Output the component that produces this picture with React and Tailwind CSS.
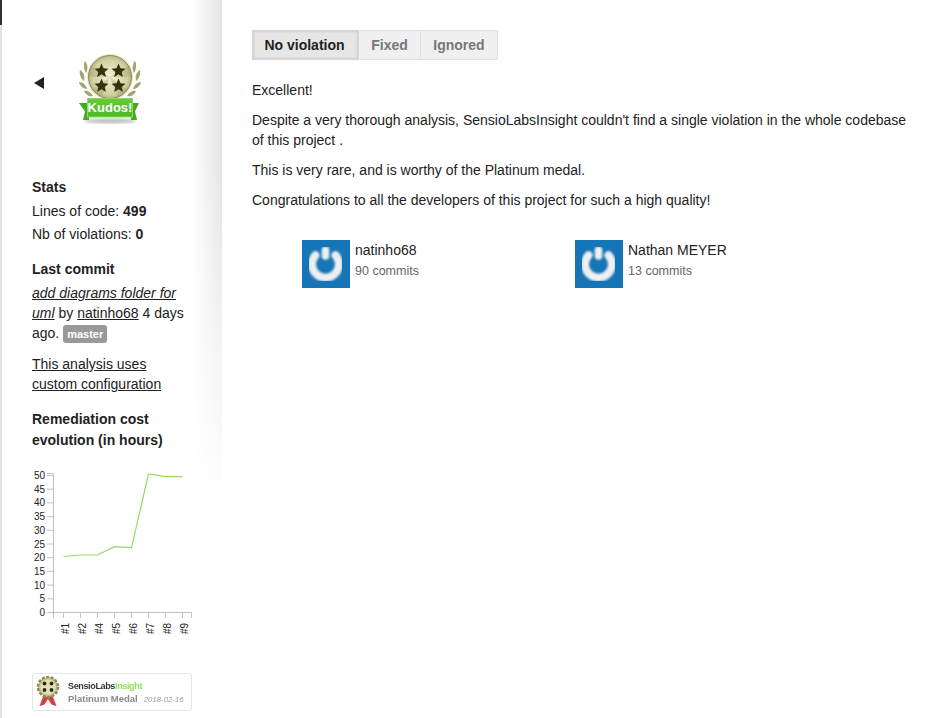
function Star({ x, y }) {
  return <path transform={`translate(${x} ${y}) scale(0.78)`} d="M0-9.5l2.6 6 6.4.6-4.9 4.2 1.5 6.3L0 4.3l-5.6 3.3 1.5-6.3-4.9-4.2 6.4-.6z" />
}

function Medal() {
  return (
    <div className="relative w-[64px] h-[72px]">
      <svg width="64" height="72" viewBox="0 0 64 72">
        <defs>
          <radialGradient id="coin" cx="0.5" cy="0.5" r="0.55">
            <stop offset="0" stopColor="#f4f2da" />
            <stop offset="0.75" stopColor="#d2cfa2" />
            <stop offset="1" stopColor="#aaa672" />
          </radialGradient>
          <linearGradient id="ribbon" x1="0" y1="0" x2="0" y2="1">
            <stop offset="0" stopColor="#64cc36" />
            <stop offset="1" stopColor="#50b828" />
          </linearGradient>
          <filter id="medalblur"><feGaussianBlur stdDeviation="0.35" /></filter>
          <filter id="shadowblur"><feGaussianBlur stdDeviation="1.5" /></filter>
        </defs>
        <ellipse cx="31" cy="67" rx="26" ry="2.5" fill="#000" opacity="0.25" filter="url(#shadowblur)" />
        <g filter="url(#medalblur)">
          {/* laurel */}
          <g fill="#a6a272">
            <path d="M6 7c3 3 3 9 1 12-2-3-3-9-1-12z" />
            <path d="M1 16c4 2 5 7 4 11-3-2-5-7-4-11z" />
            <path d="M0 28c4 0 7 3 8 7-4 0-7-3-8-7z" />
            <path d="M5 37c3-1 7 1 9 5-4 1-7-1-9-5z" />
            <path d="M56 7c-3 3-3 9-1 12 2-3 3-9 1-12z" />
            <path d="M61 16c-4 2-5 7-4 11 3-2 5-7 4-11z" />
            <path d="M62 28c-4 0-7 3-8 7 4 0 7-3 8-7z" />
            <path d="M57 37c-3-1-7 1-9 5 4 1 7-1 9-5z" />
          </g>
          <circle cx="31" cy="23" r="23" fill="#e8e6cc" />
          <circle cx="31" cy="23" r="21.5" fill="url(#coin)" stroke="#8d8a58" strokeWidth="1" />
          {/* darker sunburst wedges */}
          <g fill="#8d8950" opacity="0.25">
            <path d="M31 23L11 11 10 23z" />
            <path d="M31 23L51 11 52 23z" />
            <path d="M31 23L13 36 23 43z" />
            <path d="M31 23L49 36 39 43z" />
          </g>
          <g fill="#33330b">
            <Star x={22.5} y={17} />
            <Star x={39.5} y={17} />
            <Star x={22.5} y={32} />
            <Star x={39.5} y={32} />
          </g>
          {/* ribbon */}
          <path d="M0 49h10v17H4l2-8.5z" fill="#46aa22" />
          <path d="M60 49H52v17h6l-2-8.5z" fill="#46aa22" />
          <rect x="8.5" y="44.5" width="45" height="18.5" fill="url(#ribbon)" stroke="#86dc62" strokeWidth="1" />
        </g>
      </svg>
      <span className="absolute left-[8px] top-[44px] w-[46px] h-[19px] flex items-center justify-center text-white font-bold text-[13px] leading-none">Kudos!</span>
    </div>
  )
}

function Chart() {
  const ticks = [50, 45, 40, 35, 30, 25, 20, 15, 10, 5, 0]
  const xs = [41.5, 58.5, 75.5, 92.5, 109.5, 126.5, 143.5, 160.5]
  const labels = ['#1', '#2', '#4', '#5', '#6', '#7', '#8', '#9']
  return (
    <svg width="172" height="180" viewBox="0 0 172 180" className="block">
      <g stroke="#b9c6cf" fill="none" strokeWidth="1">
        <path d="M25 13.5H31.5V152.5" />
        <path d="M31.5 152.5H169.5" />
        {ticks.map((t, i) => (
          <line key={t} x1="25" x2="31" y1={15.5 + i * 13.7} y2={15.5 + i * 13.7} />
        ))}
        {[31.5, ...xs, 169.5].map(x => (
          <line key={x} x1={x} x2={x} y1="152" y2="158" />
        ))}
      </g>
      <polyline points="41.5,96.5 58.5,95 75.5,95 92.5,86.7 109.5,87.7 126.5,14 143.5,16.7 160.5,16.7" fill="none" stroke="#8fdc66" strokeWidth="1.2" />
      <g fontSize="10" fill="#222" textAnchor="end">
        {ticks.map((t, i) => (
          <text key={t} x="23" y={19 + i * 13.7}>{t}</text>
        ))}
      </g>
      <g fontSize="10" fill="#222">
        {labels.map((l, i) => (
          <text key={l} transform={`translate(${xs[i] + 5} 174) rotate(-90)`}>{l}</text>
        ))}
      </g>
    </svg>
  )
}

function Badge() {
  return (
    <div className="w-[160px] h-[38px] border border-[#e6e6e6] rounded-[3px] flex items-center pl-[3px] gap-[6px] bg-white">
      <svg width="26" height="32" viewBox="0 0 26 32" className="blur-[0.5px]">
        <path d="M8 18L3.5 30l5-1.5L12 23l3.5 5.5 5 1.5L16 18z" fill="#d6403f" />
        <circle cx="12" cy="11" r="10" fill="#c9c698" stroke="#8f8b58" strokeWidth="2.5" strokeDasharray="3 1.5" />
        <circle cx="12" cy="11" r="7.5" fill="#e2e0ba" />
        <g fill="#2e2e12">
          <circle cx="8.5" cy="7.5" r="1.9" />
          <circle cx="15.5" cy="7.5" r="1.9" />
          <circle cx="8.5" cy="14" r="1.9" />
          <circle cx="15.5" cy="14" r="1.9" />
        </g>
      </svg>
      <div className="flex flex-col blur-[0.3px]">
        <div className="text-[9px] leading-[12px] mt-[1px] font-bold tracking-[-0.35px] text-[#333]">
          SensioLabs<span className="text-[#8ee060]">Insight</span>
        </div>
        <div className="flex items-baseline gap-[6px] leading-[13px] whitespace-nowrap">
          <span className="text-[9.5px] font-bold text-[#8a8a8a]">Platinum Medal</span>
          <span className="text-[7.8px] italic text-[#9a9a9a]">2018-02-16</span>
        </div>
      </div>
    </div>
  )
}

function Contributor({ name, commits }) {
  return (
    <div className="flex w-[273px]">
      <svg width="48" height="48" viewBox="0 0 48 48" className="bg-[#1675b6] shrink-0">
        <defs>
          <filter id="soft"><feGaussianBlur stdDeviation="0.8" /></filter>
        </defs>
        <g filter="url(#soft)" fill="none" stroke="#eef0f1" strokeLinecap="round">
          <path d="M13.5 15.2A13.5 13.5 0 1 0 33.5 15.2" strokeWidth="8" />
          <path d="M23.5 10v6" strokeWidth="7.5" />
        </g>
      </svg>
      <div className="pl-[5px]">
        <div className="text-[14px] leading-[20px] text-[#222]">{name}</div>
        <div className="text-[12.5px] leading-[20px] text-[#666] mt-[1px]">{commits} commits</div>
      </div>
    </div>
  )
}

export default function App() {
  return (
    <div className="flex min-h-[718px] bg-white text-[#222] font-['Liberation_Sans',Arial,sans-serif] text-[14px]">
      <div className="w-[2px] shrink-0 bg-[#e4e4e4] relative">
        <div className="absolute top-0 left-0 w-[2px] h-[25px] bg-[#333]" />
      </div>

      {/* sidebar */}
      <aside className="w-[220px] shrink-0 relative">
        <div className="absolute top-0 right-0 w-[30px] h-[500px] bg-gradient-to-r from-white to-[#e3e3e3] [mask-image:linear-gradient(to_bottom,black_30%,transparent)]" />
        <div className="relative pl-[30px] w-[190px]">
          <div className="flex items-start pt-[54px] h-[173px]">
            <span className="w-0 h-0 ml-[2px] mt-[23px] border-y-[6px] border-y-transparent border-r-[10px] border-r-[#222]" />
            <div className="ml-[35px]"><Medal /></div>
          </div>

          <div className="font-bold leading-[20px] mt-[4px]">Stats</div>
          <div className="leading-[20px] mt-[4px]">Lines of code: <b>499</b></div>
          <div className="leading-[20px] mt-[3px]">Nb of violations: <b>0</b></div>

          <div className="font-bold leading-[20px] mt-[15px]">Last commit</div>
          <div className="leading-[20px] mt-[4px]">
            <a className="underline italic">add diagrams folder for</a> <a className="underline italic">uml</a> <span>by</span> <a className="underline">natinho68</a> <span>4 days</span> <span>ago.</span>{' '}
            <span className="inline-block bg-[#999] text-white text-[11px] font-bold leading-[18px] px-[4px] rounded-[3px]">master</span>
          </div>

          <div className="mt-[11px] leading-[20px]">
            <a className="block underline">This analysis uses</a>
            <a className="block underline">custom configuration</a>
          </div>

          <div className="font-bold leading-[21px] mt-[15px]">Remediation cost evolution (in hours)</div>

          <div className="mt-[9px] -ml-[10px]"><Chart /></div>

          <div className="mt-[33px]"><Badge /></div>
        </div>
      </aside>

      {/* main */}
      <main className="flex-1 pl-[30px] pr-[30px] pt-[30px]">
        <div className="flex w-fit h-[30px] text-[14px] font-bold">
          <div className="w-[107px] pr-[2px] flex items-center justify-center bg-[#e6e6e6] border border-[#d8d8d8] shadow-[inset_0_0_3px_rgba(0,0,0,0.2)] text-[#222]">No violation</div>
          <div className="w-[62px] flex items-center justify-center bg-[#f0f0f0] border-y border-r border-[#e0e0e0] text-[#777]">Fixed</div>
          <div className="w-[77px] flex items-center justify-center bg-[#f0f0f0] border-y border-r border-[#e0e0e0] text-[#777]">Ignored</div>
        </div>

        <p className="leading-[20px] mt-[20px]">Excellent!</p>
        <p className="leading-[20px] mt-[10px]">Despite a very thorough analysis, SensioLabsInsight couldn't find a single violation in the whole codebase of this project .</p>
        <p className="leading-[20px] mt-[10px]">This is very rare, and is worthy of the Platinum medal.</p>
        <p className="leading-[20px] mt-[10px]">Congratulations to all the developers of this project for such a high quality!</p>

        <div className="flex pl-[50px] mt-[30px]">
          <Contributor name="natinho68" commits={90} />
          <Contributor name="Nathan MEYER" commits={13} />
        </div>
      </main>
    </div>
  )
}
